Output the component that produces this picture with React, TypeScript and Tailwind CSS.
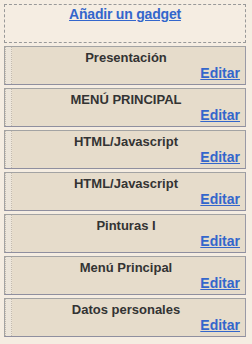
const gadgets = [
  "Presentación",
  "MENÚ PRINCIPAL",
  "HTML/Javascript",
  "HTML/Javascript",
  "Pinturas I",
  "Menú Principal",
  "Datos personales",
];

function GadgetItem({ title }: { title: string }) {
  return (
    <div className="flex h-[39px] border border-[#a3a3a3] border-b-[#8f8f9f] border-r-[#9a9aa6] bg-[#e6dccb]">
      <div className="w-[7px] shrink-0 border-x border-dotted border-[#c4bbae] bg-[#ece5da]" />
      <div className="flex flex-1 flex-col pr-[5px]">
        <div className="pt-[4px] text-center text-[13px] font-bold leading-[14px] text-[#333333]">
          {title}
        </div>
        <div className="-mt-[4px] text-right">
          <a
            href="#"
            className="text-[14px] font-bold leading-[16px] text-[#3366cc] underline"
          >
            Editar
          </a>
        </div>
      </div>
    </div>
  );
}

export default function App() {
  return (
    <div
      className="h-[344px] w-[252px] bg-[#f5ede2] pl-[4px] pr-[6px] pt-[4px]"
      style={{ fontFamily: '"Liberation Sans", Arial, sans-serif' }}
    >
      <div className="flex h-[39px] justify-center border border-dashed border-[#999999] pt-[1px]">
        <a
          href="#"
          className="text-[14px] font-bold leading-[16px] tracking-[-0.2px] text-[#3366cc] underline"
        >
          Añadir un gadget
        </a>
      </div>
      <div className="mt-[3px] flex flex-col gap-[3px]">
        {gadgets.map((g, i) => (
          <GadgetItem key={i} title={g} />
        ))}
      </div>
    </div>
  );
}
